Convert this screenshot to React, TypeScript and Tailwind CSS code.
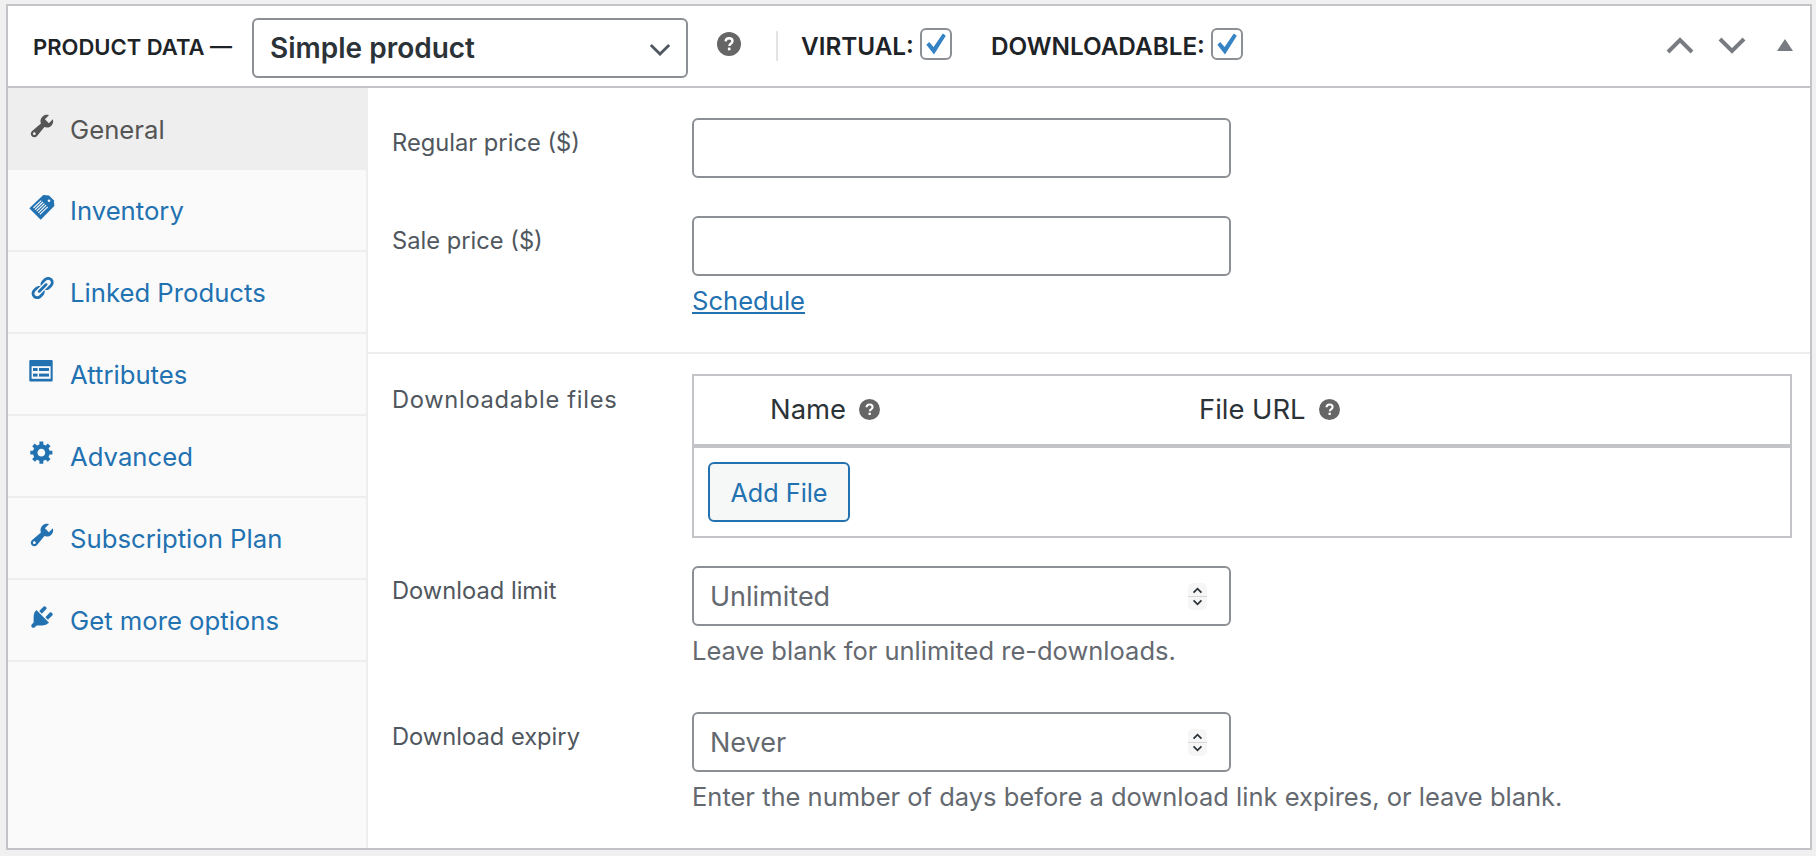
import React from "react";

const WRENCH = "M16.68 9.77c-1.34 1.34-3.3 1.67-4.95.99l-5.41 6.52c-.99.99-2.59.99-3.58 0s-.99-2.59 0-3.58l6.52-5.42c-.68-1.65-.35-3.61.99-4.95 1.28-1.28 3.12-1.62 4.72-1.06l-2.89 2.89 2.82 2.82 2.86-2.87c.53 1.58.18 3.39-1.08 4.68zM3.81 16.21c.4.39 1.04.39 1.43 0 .4-.4.4-1.04 0-1.43-.39-.4-1.03-.4-1.43 0-.39.39-.39 1.03 0 1.43z";
const LINK = "M17.74 2.76c1.68 1.69 1.68 4.41 0 6.1l-1.53 1.52c-1.12 1.12-2.7 1.47-4.14 1.09l2.62-2.61.76-.77.76-.76c.84-.84.84-2.2 0-3.04-.84-.85-2.2-.85-3.04 0l-.77.76-3.38 3.38c-.37-1.44-.02-3.02 1.1-4.14l1.52-1.53c1.69-1.68 4.42-1.68 6.1 0zM8.59 13.43l5.34-5.34c.42-.42.42-1.1 0-1.52-.44-.43-1.13-.39-1.53 0l-5.33 5.34c-.42.42-.42 1.1 0 1.52.44.43 1.13.39 1.52 0zm-.76 2.29l4.14-4.15c.38 1.44.03 3.02-1.09 4.14l-1.52 1.53c-1.69 1.68-4.41 1.68-6.1 0-1.68-1.68-1.68-4.42 0-6.1l1.53-1.52c1.12-1.12 2.7-1.47 4.14-1.1l-4.14 4.15c-.85.84-.85 2.2 0 3.05.84.84 2.2.84 3.04 0z";
const GEAR = "M18 12h-2.18c-.17.7-.44 1.35-.81 1.93l1.54 1.54-2.1 2.1-1.54-1.54c-.58.36-1.23.63-1.91.79V19H8v-2.18c-.68-.16-1.33-.43-1.91-.79l-1.54 1.54-2.12-2.12 1.54-1.54c-.36-.58-.63-1.23-.79-1.91H1V9.03h2.17c.16-.7.44-1.35.8-1.94L2.43 5.55l2.1-2.1 1.54 1.54c.58-.37 1.24-.64 1.93-.81V2h3v2.18c.68.16 1.33.43 1.91.79l1.54-1.54 2.12 2.12-1.54 1.54c.36.59.64 1.24.8 1.94H18V12zm-8.5 1.5c1.66 0 3-1.34 3-3s-1.34-3-3-3-3 1.34-3 3 1.34 3 3 3z";
const PLUG = "M13.11 4.36L9.87 7.6 8 5.73l3.24-3.24c.35-.34 1.05-.2 1.56.32.52.51.66 1.21.31 1.55zm-8 1.77l.91-1.12 9.01 9.01-1.19.84c-.71.71-2.63 1.16-3.82 1.16H6.14L4.9 17.26c-.59.59-1.54.59-2.12 0-.59-.58-.59-1.53 0-2.12l1.24-1.24v-3.88c0-1.13.4-3.19 1.09-3.89zm7.26 3.97l3.24-3.24c.34-.35 1.04-.21 1.55.31.52.51.66 1.21.31 1.55l-3.24 3.25z";

function Dash({ d, small }: { d: string; small?: boolean }) {
  return (
    <svg viewBox="0 0 20 20" className={small ? "w-[26px] h-[26px] mx-[1px] fill-current shrink-0 mb-[8px]" : "w-[28px] h-[28px] fill-current shrink-0 mb-[7px]"}>
      <path d={d} />
    </svg>
  );
}

function TagIcon() {
  return (
    <svg viewBox="0 0 28 28" className="w-[28px] h-[28px] shrink-0 mb-[7px]">
      <path className="fill-current" d="M1.3 15.3 15.3 2 21 2.6 26 7.5 26.3 13 12.7 26.7z" />
      <circle cx="21" cy="7.8" r="1.3" fill="#fafafa" />
      <g stroke="#fafafa" strokeWidth="1.1">
        <path d="M5.5 15 13.2 7.6" />
        <path d="M7.1 16.6 14.9 9" />
        <path d="M8.7 18.2 16.5 10.6" />
        <path d="M10.3 19.8 18.1 12.2" />
        <path d="M11.9 21.4 19.7 13.8" />
      </g>
    </svg>
  );
}

function AttrIcon() {
  return (
    <svg viewBox="0 0 28 28" className="w-[28px] h-[28px] shrink-0 mb-[7px]">
      <rect x="1.3" y="3" width="23.4" height="21.4" rx="1" className="fill-current" />
      <rect x="3.6" y="9.2" width="19" height="12.6" fill="#fafafa" />
      <rect x="5" y="11" width="4.6" height="3" className="fill-current" />
      <rect x="5" y="16.6" width="4.6" height="3" className="fill-current" />
      <rect x="11" y="11" width="10" height="3" className="fill-current" />
      <rect x="11" y="16.6" width="10" height="3" className="fill-current" />
    </svg>
  );
}

function Help({ size }: { size: "lg" | "sm" }) {
  return (
    <svg viewBox="0 0 24 24" className={size === "lg" ? "w-[24px] h-[24px] shrink-0" : "w-[21px] h-[21px] shrink-0"}>
      <circle cx="12" cy="12" r="12" fill="#666666" />
      <path d="M8.6 9.4c.1-2 1.5-3.2 3.5-3.2 2 0 3.4 1.2 3.4 2.9 0 1.3-.7 2-1.7 2.7-1 .7-1.4 1.1-1.4 2.2" fill="none" stroke="#fff" strokeWidth="2.4" />
      <rect x="10.9" y="15.6" width="2.6" height="2.7" fill="#fff" />
    </svg>
  );
}

function Check() {
  return (
    <span className="w-[32px] h-[32px] rounded-[6px] border-2 border-[#8c8f94] bg-white flex items-center justify-center shrink-0">
      <svg viewBox="0 0 24 24" className="w-[24px] h-[24px] fill-[#3582c4]">
        <path d="M2.4 12.8 5.2 10 9.6 15 18.8 1.6 21.8 3.8 10 22.4z" />
      </svg>
    </span>
  );
}

function Spinner() {
  return (
    <span className="absolute right-[24px] top-[17px] w-[19px] h-[27px] rounded-[5px] bg-[#f6f6f6] flex flex-col items-center justify-between py-[4px]">
      <svg viewBox="0 0 12 8" className="w-[11px] h-[7px] fill-none stroke-[#2c3338] stroke-2"><path d="M1.5 6.5 6 2l4.5 4.5" /></svg>
      <span className="absolute left-0 right-0 top-[13px] h-[1px] bg-[#d8d8d8]" />
      <svg viewBox="0 0 12 8" className="w-[11px] h-[7px] fill-none stroke-[#2c3338] stroke-2"><path d="M1.5 1.5 6 6l4.5-4.5" /></svg>
    </span>
  );
}

const NAV: { label: string; icon: React.ReactNode }[] = [
  { label: "Inventory", icon: <TagIcon /> },
  { label: "Linked Products", icon: <Dash d={LINK} small /> },
  { label: "Attributes", icon: <AttrIcon /> },
  { label: "Advanced", icon: <Dash d={GEAR} small /> },
  { label: "Subscription Plan", icon: <Dash d={WRENCH} /> },
  { label: "Get more options", icon: <Dash d={PLUG} /> },
];

function Field({ label, placeholder, spin, className, children }: { label: string; placeholder?: string; spin?: boolean; className?: string; children?: React.ReactNode }) {
  return (
    <div className={"grid grid-cols-[300px_539px] " + (className ?? "")}>
      <label className="pt-[11px] text-[23.7px] leading-[28px] text-[#50575e]">{label}</label>
      <div>
        <div className="relative">
          <input
            type="text"
            placeholder={placeholder}
            className="w-full h-[60px] rounded-[6px] border-2 border-[#8c8f94] bg-white px-[16px] text-[27px] text-[#2c3338] outline-none placeholder:text-[#646970]"
          />
          {spin && <Spinner />}
        </div>
        {children}
      </div>
    </div>
  );
}

function Desc({ children }: { children: React.ReactNode }) {
  return <p className="mt-[9px] text-[25.5px] leading-[32px] text-[#646970] whitespace-nowrap">{children}</p>;
}

export default function App() {
  return (
    <div className="min-h-screen bg-[#f0f0f1] pt-[4px] pl-[6px] pr-[4px] font-[Inter,sans-serif]">
      <div className="h-[846px] border-2 border-[#c3c4c7] bg-white flex flex-col">
        <header className="h-[82px] shrink-0 border-b-2 border-[#c3c4c7] flex items-center pl-[25px] pr-[17px]">
          <span className="w-[219px] shrink-0 text-[22px] font-semibold text-[#1d2327] pt-[2px] whitespace-nowrap">PRODUCT DATA —</span>
          <div className="relative w-[436px] h-[60px] shrink-0 mt-[3px]">
            <select className="w-full h-full appearance-none rounded-[6px] border-2 border-[#8c8f94] bg-white pl-[16px] text-[28px] font-semibold text-[#2c3338] outline-none">
              <option>Simple product</option>
            </select>
            <svg viewBox="0 0 24 14" className="absolute right-[17px] top-[25px] w-[22px] h-[13px] fill-none stroke-[#50575e] stroke-[3]">
              <path d="M2 2l10 10L22 2" />
            </svg>
          </div>
          <span className="ml-[29px] mb-[4px]"><Help size="lg" /></span>
          <span className="ml-[35px] w-[2px] h-[30px] bg-[#e4e4e4]" />
          <span className="ml-[23px] text-[24.3px] font-semibold text-[#1d2327] whitespace-nowrap">VIRTUAL:</span>
          <span className="ml-[6px] mb-[4px]"><Check /></span>
          <span className="ml-[39px] text-[24.3px] font-semibold text-[#1d2327] whitespace-nowrap">DOWNLOADABLE:</span>
          <span className="ml-[6px] mb-[4px]"><Check /></span>
          <div className="ml-auto flex items-center gap-[24px] mb-[2px]">
            <svg viewBox="0 0 28 17" className="w-[28px] h-[17px] fill-none stroke-[#787c82] stroke-[4]"><path d="M2 15 14 3l12 12" /></svg>
            <svg viewBox="0 0 28 17" className="w-[28px] h-[17px] fill-none stroke-[#787c82] stroke-[4]"><path d="M2 2l12 12L26 2" /></svg>
            <svg viewBox="0 0 16 12" className="ml-[7px] w-[16px] h-[12px] fill-[#787c82]"><path d="M8 0l8 12H0z" /></svg>
          </div>
        </header>
        <div className="flex-1 flex min-h-0">
          <aside className="w-[360px] shrink-0 bg-[#fafafa] border-r-2 border-[#eeeeee]">
            <div className="h-[82px] bg-[#eeeeee] flex items-center pl-[20px] gap-[14px] text-[#555555]">
              <Dash d={WRENCH} />
              <span className="text-[25.7px] pt-[2px]">General</span>
            </div>
            {NAV.map((n) => (
              <div key={n.label} className="h-[82px] border-b-2 border-[#eeeeee] flex items-center pl-[20px] gap-[14px] text-[#2271b1]">
                {n.icon}
                <span className="text-[25.7px] pt-[2px]">{n.label}</span>
              </div>
            ))}
          </aside>
          <main className="flex-1 min-w-0">
            <section className="h-[266px] border-b-2 border-[#eeeeee] pl-[24px] pt-[30px]">
              <Field label="Regular price ($)" />
              <Field label="Sale price ($)" className="mt-[38px]">
                <a href="#" className="block mt-[8px] text-[25.6px] leading-[34px] text-[#2271b1] underline">Schedule</a>
              </Field>
            </section>
            <section className="pl-[24px] pt-[20px] pr-[18px]">
              <div className="grid grid-cols-[300px_1fr]">
                <label className="pt-[12px] text-[23.7px] tracking-[0.7px] leading-[28px] text-[#50575e]">Downloadable files</label>
                <div className="h-[164px] border-2 border-[#c3c4c7] flex flex-col">
                  <div className="h-[72px] shrink-0 border-b-4 border-[#c3c4c7] flex items-center text-[#2c3338] text-[27.4px]">
                    <div className="w-[505px] pl-[76px] flex items-center gap-[13px]">Name <Help size="sm" /></div>
                    <div className="flex items-center gap-[13px]">File URL <Help size="sm" /></div>
                  </div>
                  <div className="pl-[14px] pt-[14px]">
                    <button className="w-[142px] h-[60px] rounded-[6px] border-2 border-[#2271b1] bg-[#f6f7f7] pt-[3px] text-[25.2px] text-[#2271b1]">Add File</button>
                  </div>
                </div>
              </div>
              <Field label="Download limit" placeholder="Unlimited" spin className="mt-[28px]">
                <Desc>Leave blank for unlimited re-downloads.</Desc>
              </Field>
              <Field label="Download expiry" placeholder="Never" spin className="mt-[45px]">
                <Desc>Enter the number of days before a download link expires, or leave blank.</Desc>
              </Field>
            </section>
          </main>
        </div>
      </div>
    </div>
  );
}
